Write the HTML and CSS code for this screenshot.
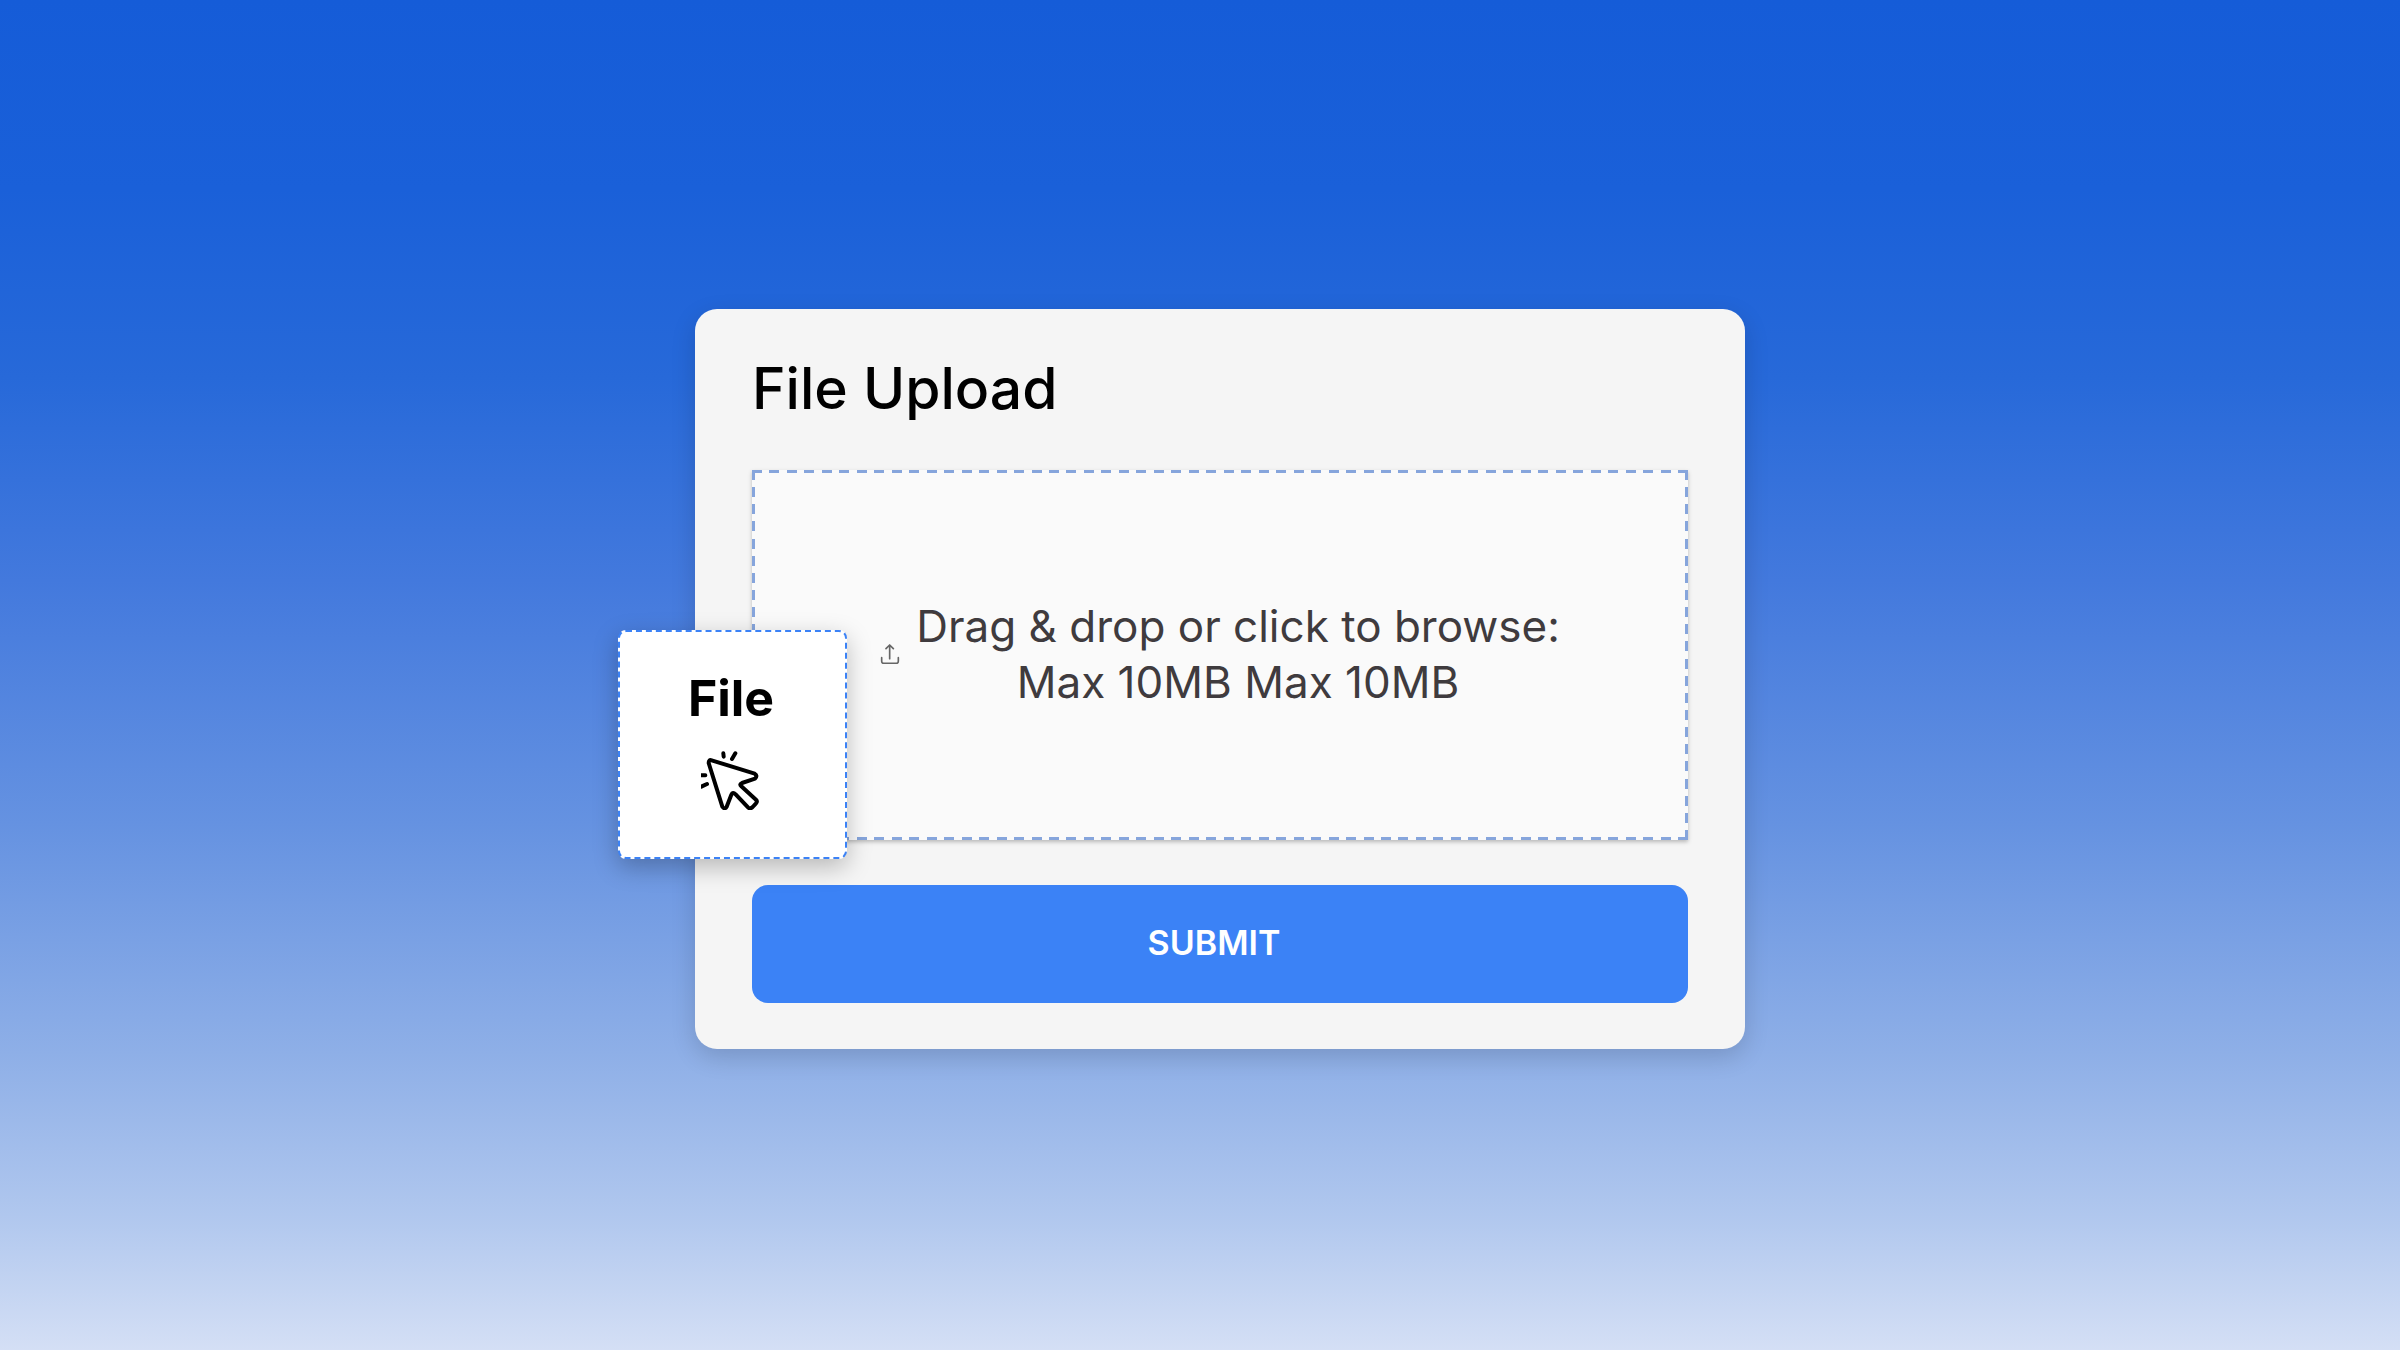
FILE: index.html
```html
<!DOCTYPE html>
<html lang="en">
<head>
    <meta charset="UTF-8">
    <meta name="viewport" content="width=device-width, initial-scale=1.0">
    <title>File Upload</title>
    <link rel="stylesheet" href="styles.css">
</head>
<body>
    <form class="upload-card">
        <h1 class="title">File Upload</h1>

        <label class="drop-zone" for="fileInput">
            <svg class="upload-icon" viewBox="0 0 60 60" aria-hidden="true">
                <path d="M29 44V4M18 14L29 3L40 14M5 41V52Q5 58 11 58H49Q55 58 55 52V41"/>
            </svg>
            <span class="drop-text">Drag &amp; drop or click to browse:<br>Max 10MB Max 10MB</span>
        </label>
        <input class="file-input" type="file" id="fileInput" name="file">

        <button class="submit-btn" type="submit">SUBMIT</button>

        <!-- file being dragged -->
        <div class="file-tile" draggable="true">
            <span class="file-name">File</span>
            <svg class="cursor-icon" viewBox="0 0 180 180" aria-hidden="true">
                <path d="M32 31L161 71Q171 77 162 86L123 99Q114 103 121 109L165 149Q170 154 165 160L155 171Q147 178 141 172L104 133Q95 124 91 134L77 170Q71 180 64 170L23 39Q23 28 32 31Z"/>
                <path d="M67 10L68 20M103 10L93 27M1 76H13M1 110L18 102"/>
            </svg>
        </div>
    </form>
</body>
</html>
```

FILE: styles.css
```css
* {
    box-sizing: border-box;
}

body {
    display: flex;
    align-items: center;
    justify-content: center;
    min-height: 100vh;
    margin: 0;
    padding: 8px 0 0 40px;
    font-family: Inter, sans-serif;
    background: linear-gradient(#155cd8 0%, #1a60d9 14%, #2769d9 28%, #4379dd 43%, #6592e1 61%, #8eafe7 78%, #b0c7ee 90%, #d4dff5 100%);
}

.upload-card {
    position: relative;
    display: flex;
    flex-direction: column;
    width: 100%;
    max-width: 1050px;
    padding: 46px 57px;
    background: #f5f5f5;
    border-radius: 22px;
    box-shadow: 0 8px 24px rgba(0, 0, 0, 0.15);
}

.title {
    margin: 0 0 47px;
    font-size: 57px;
    font-weight: 500;
    line-height: 68px;
    color: #000;
}

/* long dashes drawn with gradients, one per side */
.drop-zone {
    --dash-x: repeating-linear-gradient(90deg, #86a5dc 0 10px, transparent 10px calc((100% - 10px) / 53));
    --dash-y: repeating-linear-gradient(#86a5dc 0 10px, transparent 10px calc((100% - 10px) / 21));
    display: flex;
    align-items: center;
    justify-content: center;
    gap: 16px;
    margin-bottom: 45px;
    padding: 128px 24px 130px;
    background:
        var(--dash-x) top / 100% 3px no-repeat,
        var(--dash-x) bottom / 100% 3px no-repeat,
        var(--dash-y) left / 3px 100% no-repeat,
        var(--dash-y) right / 3px 100% no-repeat,
        #fafafa;
    box-shadow: 0 2px 4px rgba(0, 0, 0, 0.25);
    cursor: pointer;
}

.upload-icon {
    flex: none;
    width: 20px;
    height: 20px;
    fill: none;
    stroke: #666;
    stroke-width: 5;
    stroke-linecap: round;
    stroke-linejoin: round;
}

.drop-text {
    font-size: 44px;
    line-height: 56px;
    text-align: center;
    color: #3f3b3e;
}

.file-input {
    display: none;
}

.submit-btn {
    padding: 38px 12px 40px 0;
    font-family: inherit;
    font-size: 34px;
    font-weight: 600;
    line-height: 40px;
    color: #fff;
    background: #3b82f6;
    border: none;
    border-radius: 16px;
    cursor: pointer;
}

.file-tile {
    position: absolute;
    top: 321px;
    left: -77px;
    display: flex;
    flex-direction: column;
    align-items: center;
    gap: 22px;
    width: 229px;
    padding: 36px 3px 47px 0;
    background: #fff;
    border: 2px dashed #3b82f6;
    border-radius: 8px;
    box-shadow: 0 8px 24px rgba(0, 0, 0, 0.25);
    cursor: grab;
}

.file-name {
    font-size: 50px;
    font-weight: 700;
    line-height: 60px;
    color: #000;
}

.cursor-icon {
    width: 60px;
    height: 60px;
    fill: none;
    stroke: #000;
    stroke-width: 12;
    stroke-linecap: round;
    stroke-linejoin: round;
}
```
